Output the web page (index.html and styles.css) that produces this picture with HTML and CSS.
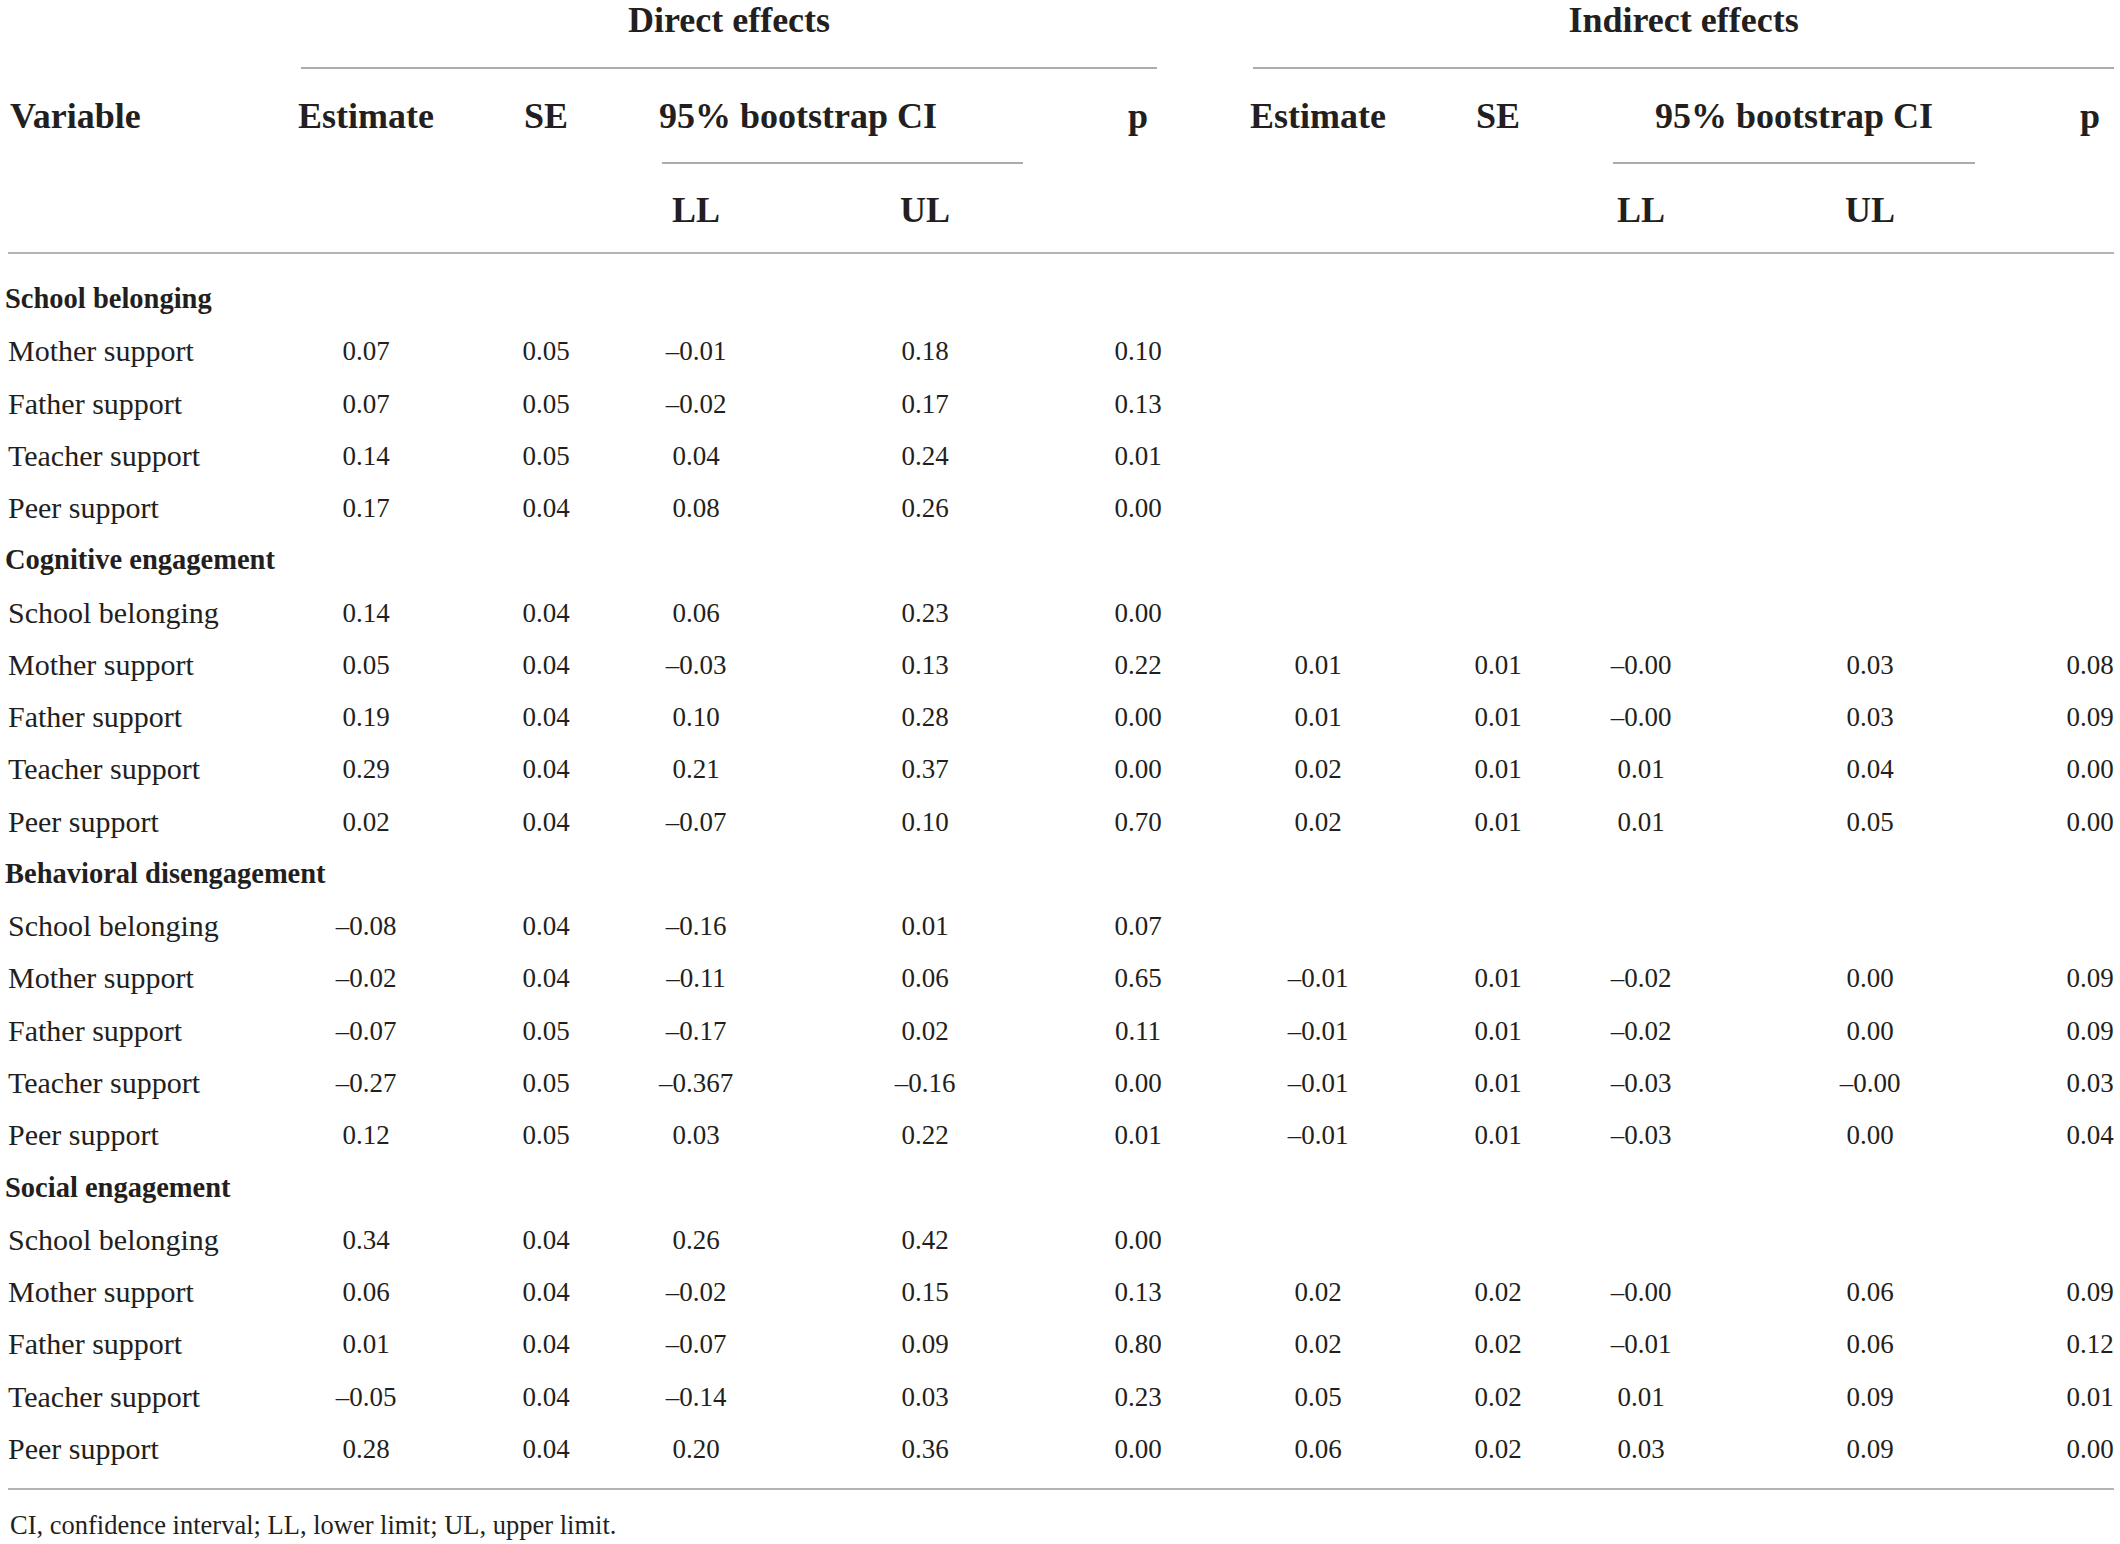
FILE: index.html
```html
<!doctype html>
<html lang="en">
<head>
	<meta charset="UTF-8">
	<title>Direct and indirect effects</title>
	<link rel="stylesheet" href="styles.css">
</head>
<body>
	<div class="wrap">
		<table class="tbl">
			<colgroup>
				<col class="c-var">
				<col class="c-est">
				<col class="c-se">
				<col class="c-ll">
				<col class="c-ul">
				<col class="c-p">
				<col class="c-est2">
				<col class="c-se2">
				<col class="c-ll2">
				<col class="c-ul2">
				<col class="c-p2">
			</colgroup>
			<thead>
				<tr class="hrow-top">
					<th></th>
					<th colspan="5"><div class="span-line direct">Direct effects</div></th>
					<th colspan="5"><div class="span-line indirect">Indirect effects</div></th>
				</tr>
				<tr class="hrow-mid">
					<th class="var">Variable</th>
					<th>Estimate</th>
					<th>SE</th>
					<th colspan="2"><div class="ci-line direct">95% bootstrap CI</div></th>
					<th class="p-direct">p</th>
					<th>Estimate</th>
					<th>SE</th>
					<th colspan="2"><div class="ci-line indirect">95% bootstrap CI</div></th>
					<th class="p-indirect">p</th>
				</tr>
				<tr class="hrow-sub">
					<th></th><th></th><th></th>
					<th>LL</th><th>UL</th>
					<th></th><th></th><th></th>
					<th>LL</th><th>UL</th>
					<th></th>
				</tr>
			</thead>
			<tbody>
				<tr class="grp"><td colspan="11">School belonging</td></tr>
				<tr><td>Mother support</td><td>0.07</td><td>0.05</td><td>&ndash;0.01</td><td>0.18</td><td>0.10</td><td></td><td></td><td></td><td></td><td></td></tr>
				<tr><td>Father support</td><td>0.07</td><td>0.05</td><td>&ndash;0.02</td><td>0.17</td><td>0.13</td><td></td><td></td><td></td><td></td><td></td></tr>
				<tr><td>Teacher support</td><td>0.14</td><td>0.05</td><td>0.04</td><td>0.24</td><td>0.01</td><td></td><td></td><td></td><td></td><td></td></tr>
				<tr><td>Peer support</td><td>0.17</td><td>0.04</td><td>0.08</td><td>0.26</td><td>0.00</td><td></td><td></td><td></td><td></td><td></td></tr>

				<tr class="grp"><td colspan="11">Cognitive engagement</td></tr>
				<tr><td>School belonging</td><td>0.14</td><td>0.04</td><td>0.06</td><td>0.23</td><td>0.00</td><td></td><td></td><td></td><td></td><td></td></tr>
				<tr><td>Mother support</td><td>0.05</td><td>0.04</td><td>&ndash;0.03</td><td>0.13</td><td>0.22</td><td>0.01</td><td>0.01</td><td>&ndash;0.00</td><td>0.03</td><td>0.08</td></tr>
				<tr><td>Father support</td><td>0.19</td><td>0.04</td><td>0.10</td><td>0.28</td><td>0.00</td><td>0.01</td><td>0.01</td><td>&ndash;0.00</td><td>0.03</td><td>0.09</td></tr>
				<tr><td>Teacher support</td><td>0.29</td><td>0.04</td><td>0.21</td><td>0.37</td><td>0.00</td><td>0.02</td><td>0.01</td><td>0.01</td><td>0.04</td><td>0.00</td></tr>
				<tr><td>Peer support</td><td>0.02</td><td>0.04</td><td>&ndash;0.07</td><td>0.10</td><td>0.70</td><td>0.02</td><td>0.01</td><td>0.01</td><td>0.05</td><td>0.00</td></tr>

				<tr class="grp"><td colspan="11">Behavioral disengagement</td></tr>
				<tr><td>School belonging</td><td>&ndash;0.08</td><td>0.04</td><td>&ndash;0.16</td><td>0.01</td><td>0.07</td><td></td><td></td><td></td><td></td><td></td></tr>
				<tr><td>Mother support</td><td>&ndash;0.02</td><td>0.04</td><td>&ndash;0.11</td><td>0.06</td><td>0.65</td><td>&ndash;0.01</td><td>0.01</td><td>&ndash;0.02</td><td>0.00</td><td>0.09</td></tr>
				<tr><td>Father support</td><td>&ndash;0.07</td><td>0.05</td><td>&ndash;0.17</td><td>0.02</td><td>0.11</td><td>&ndash;0.01</td><td>0.01</td><td>&ndash;0.02</td><td>0.00</td><td>0.09</td></tr>
				<tr><td>Teacher support</td><td>&ndash;0.27</td><td>0.05</td><td>&ndash;0.367</td><td>&ndash;0.16</td><td>0.00</td><td>&ndash;0.01</td><td>0.01</td><td>&ndash;0.03</td><td>&ndash;0.00</td><td>0.03</td></tr>
				<tr><td>Peer support</td><td>0.12</td><td>0.05</td><td>0.03</td><td>0.22</td><td>0.01</td><td>&ndash;0.01</td><td>0.01</td><td>&ndash;0.03</td><td>0.00</td><td>0.04</td></tr>

				<tr class="grp"><td colspan="11">Social engagement</td></tr>
				<tr><td>School belonging</td><td>0.34</td><td>0.04</td><td>0.26</td><td>0.42</td><td>0.00</td><td></td><td></td><td></td><td></td><td></td></tr>
				<tr><td>Mother support</td><td>0.06</td><td>0.04</td><td>&ndash;0.02</td><td>0.15</td><td>0.13</td><td>0.02</td><td>0.02</td><td>&ndash;0.00</td><td>0.06</td><td>0.09</td></tr>
				<tr><td>Father support</td><td>0.01</td><td>0.04</td><td>&ndash;0.07</td><td>0.09</td><td>0.80</td><td>0.02</td><td>0.02</td><td>&ndash;0.01</td><td>0.06</td><td>0.12</td></tr>
				<tr><td>Teacher support</td><td>&ndash;0.05</td><td>0.04</td><td>&ndash;0.14</td><td>0.03</td><td>0.23</td><td>0.05</td><td>0.02</td><td>0.01</td><td>0.09</td><td>0.01</td></tr>
				<tr><td>Peer support</td><td>0.28</td><td>0.04</td><td>0.20</td><td>0.36</td><td>0.00</td><td>0.06</td><td>0.02</td><td>0.03</td><td>0.09</td><td>0.00</td></tr>
			</tbody>
		</table>

		<p class="note">CI, confidence interval; LL, lower limit; UL, upper limit.</p>
	</div>
</body>
</html>
```

FILE: styles.css
```css
body {
	margin: 0;
	background: #fff;
	color: #231f20;
	font-family: "Liberation Serif", "Times New Roman", serif;
}

.wrap { padding-left: 8px; width: 2106px; }

.tbl { border-collapse: separate; border-spacing: 0; table-layout: fixed; width: 2106px; }
.tbl th, .tbl td { padding: 0; }

/* column widths */
.c-var { width: 282px; }
.c-est { width: 152px; }
.c-se { width: 208px; }
.c-ll { width: 92px; }
.c-ul { width: 288px; }
.c-p { width: 190px; }
.c-est2 { width: 196px; }
.c-se2 { width: 164px; }
.c-ll2 { width: 122px; }
.c-ul2 { width: 298px; }
.c-p2 { width: 114px; }

/* header */
.tbl thead th { font-size: 36px; font-weight: bold; line-height: 40px; text-align: center; vertical-align: top; }
.tbl thead th.var { text-align: left; padding-left: 2px; }

.span-line { padding-bottom: 27px; border-bottom: 2px solid #acacac; }
.span-line.direct { margin: 0 63px 0 11px; }
.span-line.indirect { margin: 0 0 0 33px; }

.tbl .hrow-mid th { padding-top: 27px; }
.ci-line { padding-bottom: 26px; border-bottom: 2px solid #acacac; }
.ci-line.direct { margin: 0 7px 0 12px; text-align: left; text-indent: -3px; }
.ci-line.indirect { margin: 0 25px 0 33px; }
.tbl .hrow-mid .p-direct { padding-left: 26px; }
.tbl .hrow-mid .p-indirect { padding-left: 66px; }

.tbl .hrow-sub th { padding-top: 26px; padding-bottom: 22px; border-bottom: 2px solid #b4b4b4; }

/* body */
.tbl tbody td { font-size: 27px; line-height: 52.27px; text-align: center; vertical-align: middle; white-space: nowrap; }
.tbl tbody td:first-child { font-size: 30px; text-align: left; }
.tbl tbody tr.grp td { font-size: 28.5px; font-weight: bold; text-indent: -3px; }
.tbl tbody tr:first-child td { padding-top: 19px; }
.tbl tbody tr:last-child td { padding-bottom: 13px; border-bottom: 2px solid #b4b4b4; }

/* shift the wide columns so the figures sit under their headings */
.tbl tbody td:nth-child(5), .tbl .hrow-sub th:nth-child(5) { padding-left: 78px; }
.tbl tbody td:nth-child(6), .tbl .hrow-sub th:nth-child(6) { padding-left: 26px; }
.tbl tbody td:nth-child(10), .tbl .hrow-sub th:nth-child(10) { padding-left: 38px; }
.tbl tbody td:nth-child(11), .tbl .hrow-sub th:nth-child(11) { padding-left: 66px; }

.note { margin: 0; padding: 17px 0 0 2px; font-size: 26.5px; line-height: 36px; }
```
